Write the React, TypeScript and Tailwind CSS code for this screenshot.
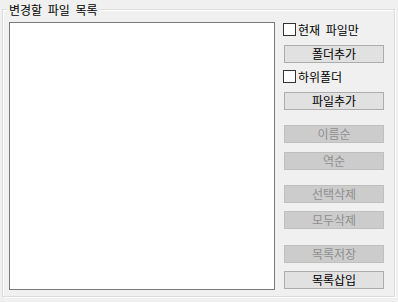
const font = { fontFamily: '"Noto Sans CJK KR", "Noto Sans", sans-serif' };

const Btn = ({ label, disabled, className = '' }: { label: string; disabled?: boolean; className?: string }) => (
  <button
    type="button"
    disabled={disabled}
    className={`ml-[1px] flex h-[18px] w-[100px] items-center justify-center border text-[12px] leading-none ${
      disabled ? 'border-[#bfbfbf] bg-[#cccccc] text-[#8f8f8f]' : 'border-[#adadad] bg-[#e1e1e1] text-black'
    } ${className}`}
  >
    {label}
  </button>
);

const Check = ({ label, className = '' }: { label: string; className?: string }) => (
  <label className={`flex h-[15px] items-center gap-[2px] text-[12px] leading-none text-black [word-spacing:3px] ${className}`}>
    <span className="h-[13px] w-[13px] border border-[#333333] bg-white" />
    <span>{label}</span>
  </label>
);

export default function App() {
  return (
    <div className="h-[302px] w-[398px] bg-[#f0f0f0] pb-[5px] pl-[2px] pr-[3px] pt-[9px]" style={font}>
      <div className="relative flex h-full border border-[#dcdcdc] pl-[6px] pt-[12px] shadow-[inset_1px_1px_0_#ffffff,1px_1px_0_#ffffff]">
        <span className="absolute left-[4px] top-[-8px] bg-[#f0f0f0] px-[2px] text-[12px] leading-[15px] text-black [word-spacing:3px]">
          변경할 파일 목록
        </span>
        <div className="h-[268px] w-[266px] border border-[#7a7a7a] bg-white" />
        <div className="ml-[8px] flex flex-col">
          <Check label="현재 파일만" />
          <Btn label="폴더추가" className="mt-[8px]" />
          <Check label="하위폴더" className="mt-[6px]" />
          <Btn label="파일추가" className="mt-[8px]" />
          <Btn label="이름순" disabled className="mt-[15px]" />
          <Btn label="역순" disabled className="mt-[9px]" />
          <Btn label="선택삭제" disabled className="mt-[15px]" />
          <Btn label="모두삭제" disabled className="mt-[8px]" />
          <Btn label="목록저장" disabled className="mt-[16px]" />
          <Btn label="목록삽입" className="mt-[8px]" />
        </div>
      </div>
    </div>
  );
}
